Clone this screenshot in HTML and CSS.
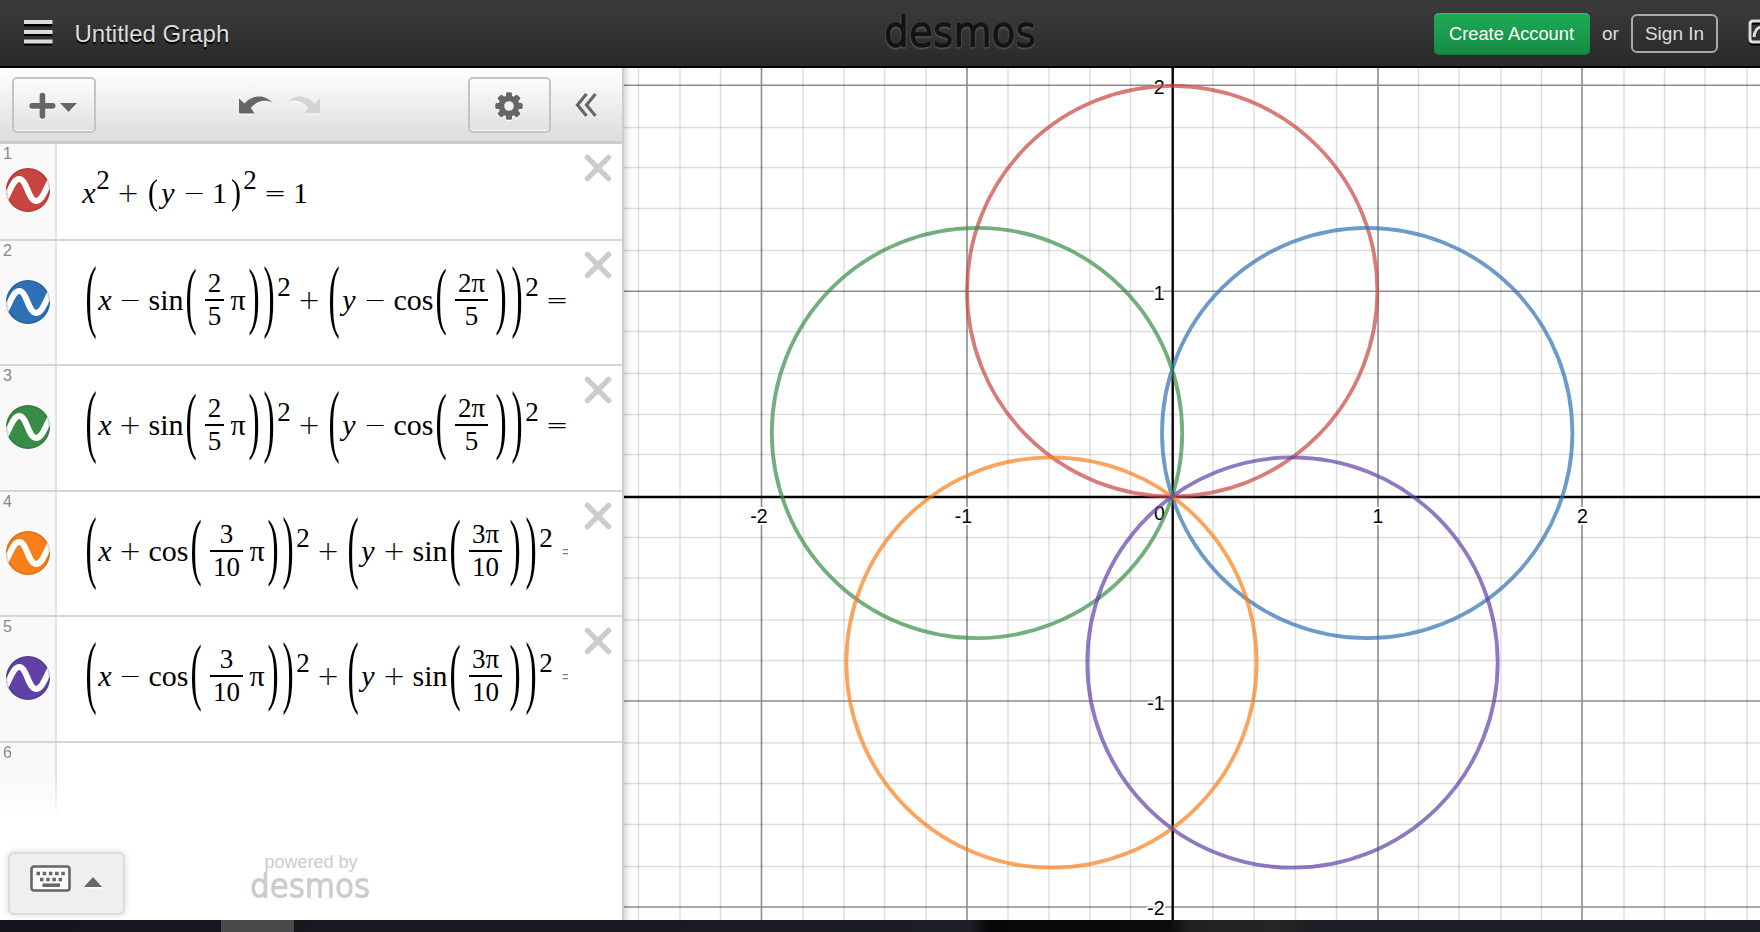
FILE: index.html
```
<!DOCTYPE html>
<html lang="en">
<head>
<meta charset="utf-8">
<title>Untitled Graph</title>
<link rel="stylesheet" href="styles.css">
</head>
<body>
<svg class="defs" width="0" height="0">
  <defs>
    <clipPath id="disc"><circle cx="22" cy="22" r="22"/></clipPath>
    <symbol id="wave" viewBox="0 0 44 44">
      <circle cx="22" cy="22" r="22" fill="currentColor"/>
      <g clip-path="url(#disc)"><path d="M-1 32C6 18 8 11 13.500 11C20.500 11 22.500 33 30 33C35.500 33 38 25 45 11" fill="none" stroke="#fff" stroke-width="6"/></g>
      <circle cx="22" cy="22" r="21.2" fill="none" stroke="#000" stroke-opacity=".12" stroke-width="1.6"/>
    </symbol>
    <symbol id="cross" viewBox="0 0 28 28"><path d="M3.4 3.4L24.6 24.6M24.6 3.4L3.4 24.6" stroke="#ccc" stroke-width="5.4" stroke-linecap="round"/></symbol>
  </defs>
</svg>

<header class="header">
  <div class="header-left">
    <svg class="burger" width="29" height="26" viewBox="0 0 29 26"><path d="M0 4.5h28M0 14h28M0 23.5h28" stroke="#000" stroke-width="4"/><path d="M0 2h28.500M0 12h28.500M0 21.500h28.500" stroke="#ddd" stroke-width="4"/></svg>
    <span class="title">Untitled Graph</span>
  </div>
  <svg class="logo" width="156" height="60" viewBox="0 0 156 60"><text x="2" y="43" textLength="152" lengthAdjust="spacingAndGlyphs" class="logo-text">desmos</text></svg>
  <div class="header-right">
    <span class="btn-create">Create Account</span>
    <span class="or">or</span>
    <span class="btn-sign">Sign In</span>
    <svg class="share" width="12" height="28" viewBox="0 0 12 28"><path d="M13 4H5Q2 4 2 7V22Q2 25 5 25H13" fill="none" stroke="#000" stroke-width="3"/><path d="M13 2H5Q2 2 2 5V20Q2 23 5 23H13M6 18Q7 9 13 8" fill="none" stroke="#ddd" stroke-width="3"/></svg>
  </div>
</header>

<main class="main">
  <section class="panel">
    <div class="toolbar">
      <span class="tool add">
        <svg width="50" height="30" viewBox="0 0 50 30"><path d="M3 14.500H25M14 3.500V25.500" stroke="#666" stroke-width="6" stroke-linecap="round" transform="translate(.400 1.400) scale(.93)"/><path d="M31 12H48L39.500 21Z" fill="#666"/></svg>
      </span>
      <span class="history">
        <svg width="84" height="20" viewBox="0 0 84 20"><path d="M1 3.500L6.500 8.500C14 0 26 -1.500 34.500 7.500C27 4 19 5.500 13 13L16.500 18.500H2.500Q1 18.500 1 17Z" fill="#666"/><path d="M82 3.500L76.500 8.500C69 0 57 -1.500 48.500 7.500C56 4 64 5.500 70 13L66.500 18.500H80.500Q82 18.500 82 17Z" fill="#d4d4d4"/></svg>
      </span>
      <span class="tool gear">
        <svg width="28" height="28" viewBox="-14 -14 28 28"><g fill="#666"><rect x="-3" y="-13.700" width="6" height="27.400" rx="1.500"/><rect x="-3" y="-13.700" width="6" height="27.400" rx="1.500" transform="rotate(45)"/><rect x="-3" y="-13.700" width="6" height="27.400" rx="1.500" transform="rotate(90)"/><rect x="-3" y="-13.700" width="6" height="27.400" rx="1.500" transform="rotate(135)"/><circle r="10.500"/></g><circle r="4.800" fill="#f1f1f1"/></svg>
      </span>
      <svg class="collapse" width="23" height="26" viewBox="0 0 23 26"><path d="M11.500 2L2.500 13L11.500 24M20.500 2L11.500 13L20.500 24" fill="none" stroke="#666" stroke-width="3.200"/></svg>
    </div>

    <div class="row r1">
      <div class="gutter"><span class="num">1</span><svg class="dot c1"><use href="#wave"/></svg></div>
      <div class="body"><div class="math simple">
        <i>x</i><span class="sup">2</span><span class="op">+</span><span class="p small">(</span><i class="y">y</i><span class="op">−</span><span class="d">1</span><span class="p small close">)</span><span class="sup">2</span><span class="op">=</span><span class="d">1</span>
      </div></div>
      <svg class="x"><use href="#cross"/></svg>
    </div>
    <div class="row r2">
      <div class="gutter"><span class="num">2</span><svg class="dot c2"><use href="#wave"/></svg></div>
      <div class="body"><div class="math">
        <span class="p big">(</span><i>x</i><span class="op">−</span><span class="fn sin">sin</span><span class="p mid">(</span><span class="frac"><span>2</span><span>5</span></span><span class="pi">π</span><span class="p mid">)</span><span class="p big">)</span><span class="sup">2</span><span class="op">+</span><span class="p big">(</span><i class="y">y</i><span class="op">−</span><span class="fn cos">cos</span><span class="p mid">(</span><span class="frac wide"><span>2π</span><span>5</span></span><span class="p mid after">)</span><span class="p big last">)</span><span class="sup">2</span><span class="op">=</span>
      </div></div>
      <svg class="x"><use href="#cross"/></svg>
    </div>
    <div class="row r3">
      <div class="gutter"><span class="num">3</span><svg class="dot c3"><use href="#wave"/></svg></div>
      <div class="body"><div class="math">
        <span class="p big">(</span><i>x</i><span class="op">+</span><span class="fn sin">sin</span><span class="p mid">(</span><span class="frac"><span>2</span><span>5</span></span><span class="pi">π</span><span class="p mid">)</span><span class="p big">)</span><span class="sup">2</span><span class="op">+</span><span class="p big">(</span><i class="y">y</i><span class="op">−</span><span class="fn cos">cos</span><span class="p mid">(</span><span class="frac wide"><span>2π</span><span>5</span></span><span class="p mid after">)</span><span class="p big last">)</span><span class="sup">2</span><span class="op">=</span>
      </div></div>
      <svg class="x"><use href="#cross"/></svg>
    </div>
    <div class="row r2">
      <div class="gutter"><span class="num">4</span><svg class="dot c4"><use href="#wave"/></svg></div>
      <div class="body"><div class="math">
        <span class="p big">(</span><i>x</i><span class="op">+</span><span class="fn cos">cos</span><span class="p mid">(</span><span class="frac wide"><span>3</span><span>10</span></span><span class="pi">π</span><span class="p mid">)</span><span class="p big">)</span><span class="sup">2</span><span class="op">+</span><span class="p big">(</span><i class="y">y</i><span class="op">+</span><span class="fn sin">sin</span><span class="p mid">(</span><span class="frac wide"><span>3π</span><span>10</span></span><span class="p mid after">)</span><span class="p big last">)</span><span class="sup">2</span><span class="op faded">=</span>
      </div></div>
      <svg class="x"><use href="#cross"/></svg>
    </div>
    <div class="row r3">
      <div class="gutter"><span class="num">5</span><svg class="dot c5"><use href="#wave"/></svg></div>
      <div class="body"><div class="math">
        <span class="p big">(</span><i>x</i><span class="op">−</span><span class="fn cos">cos</span><span class="p mid">(</span><span class="frac wide"><span>3</span><span>10</span></span><span class="pi">π</span><span class="p mid">)</span><span class="p big">)</span><span class="sup">2</span><span class="op">+</span><span class="p big">(</span><i class="y">y</i><span class="op">+</span><span class="fn sin">sin</span><span class="p mid">(</span><span class="frac wide"><span>3π</span><span>10</span></span><span class="p mid after">)</span><span class="p big last">)</span><span class="sup">2</span><span class="op faded">=</span>
      </div></div>
      <svg class="x"><use href="#cross"/></svg>
    </div>
    <div class="row empty"><div class="gutter"><span class="num">6</span></div></div>

    <footer class="panel-foot">
      <span class="keypad">
        <svg width="42" height="28" viewBox="0 0 42 28"><rect x="1.500" y="1.500" width="38" height="24" rx="2.500" fill="#fafafa" stroke="#666" stroke-width="2.600"/><path d="M6.500 8.500H35.500" stroke="#666" stroke-width="3.500" stroke-dasharray="3.500 2.700"/><path d="M10 14.500H33" stroke="#666" stroke-width="3.500" stroke-dasharray="3.500 2.700"/><path d="M12.500 20.200H30" stroke="#666" stroke-width="3.500"/></svg>
        <svg class="up" width="18" height="12" viewBox="0 0 18 12"><path d="M0 11.500H18L9 1.500Z" fill="#fff"/><path d="M0 10H18L9 0Z" fill="#666"/></svg>
      </span>
      <span class="powered">
        <span class="by">powered by</span>
        <svg width="122" height="34" viewBox="0 0 122 34"><text x="1" y="28" textLength="120" lengthAdjust="spacingAndGlyphs" class="foot-logo">desmos</text></svg>
      </span>
    </footer>
  </section>

  <section class="graph">
    <svg width="1136" height="852" viewBox="624 68 1136 852">
      <path class="minor" d="M638.500 68v852M680 68v852M720.500 68v852M803 68v852M844 68v852M884.500 68v852M926 68v852M1008 68v852M1049 68v852M1090 68v852M1130.500 68v852M1213 68v852M1254 68v852M1295.500 68v852M1336.500 68v852M1418.500 68v852M1459 68v852M1501 68v852M1541.500 68v852M1624 68v852M1664.500 68v852M1705 68v852M1747 68v852"/>
      <path class="minor" d="M624 127.500h1136M624 167.500h1136M624 208.500h1136M624 250.500h1136M624 331.500h1136M624 373.500h1136M624 414.500h1136M624 454.500h1136M624 537.500h1136M624 578h1136M624 620h1136M624 660.500h1136M624 743h1136M624 783.500h1136M624 824.500h1136M624 866.500h1136"/>
      <path class="major" d="M761.500 68v852M967 68v852M1378 68v852M1582 68v852M624 85.300h1136M624 291.300h1136M624 701h1136M624 907h1136"/>
      <path class="axis" d="M1172.700 68v852M624 497h1136"/>
      <g class="labels">
        <text x="759" y="522.500" text-anchor="middle">-2</text><text x="963.500" y="522.500" text-anchor="middle">-1</text><text x="1159.500" y="519.500" text-anchor="middle">0</text><text x="1378" y="522.500" text-anchor="middle">1</text><text x="1582.500" y="522.500" text-anchor="middle">2</text>
        <text x="1164.500" y="94" text-anchor="end">2</text><text x="1164.500" y="299.500" text-anchor="end">1</text><text x="1164.500" y="709.500" text-anchor="end">-1</text><text x="1164.500" y="914.500" text-anchor="end">-2</text>
      </g>
      <g class="curves">
        <circle class="c1" cx="1172.200" cy="291.100" r="205.200"/>
        <circle class="c2" cx="1367.200" cy="433" r="205.200"/>
        <circle class="c3" cx="977" cy="433" r="205.200"/>
        <circle class="c4" cx="1051.500" cy="662.500" r="205.200"/>
        <circle class="c5" cx="1292.500" cy="662.500" r="205.200"/>
      </g>
    </svg>
  </section>
</main>
<div class="taskbar"><span class="task"></span></div>
</body>
</html>
```
FILE: styles.css
```
* { box-sizing: border-box; }
body { margin: 0; width: 1760px; height: 932px; overflow: hidden; background: #fff; font-family: "Liberation Sans", Arial, sans-serif; display: flex; flex-direction: column; }
svg { display: block; flex: none; }
.defs { position: absolute; }

.header { height: 68px; flex: none; border-bottom: 2px solid #000; background: linear-gradient(#3b3b3b, #2a2a2a); display: grid; grid-template-columns: 882px 156px 1fr; align-items: center; color: #ddd; overflow: hidden; }
.header-left { display: flex; align-items: center; padding-left: 23.5px; gap: 22px; }
.title { font-size: 24px; line-height: 28px; text-shadow: 0 2px 1px #000; white-space: nowrap; padding-top: 1px; }
.logo-text { font: 200 41px "DejaVu Sans", sans-serif; fill: #131313; stroke: #131313; stroke-width: 2.6px; stroke-linejoin: round; }
.logo { filter: drop-shadow(0 1px 1px #666); }
.header-right { display: flex; align-items: center; padding-left: 396px; height: 66px; white-space: nowrap; }
.btn-create { width: 156px; height: 42px; margin-top: 2px; padding-right: 1px; border-radius: 5px; background: linear-gradient(#1dab57, #168a43); box-shadow: inset 0 1px #35bb6c, inset 0 -1px #117438; color: #fff; font-size: 18.3px; line-height: 41px; text-align: center; }
.or { font-size: 19px; width: 41px; text-align: center; padding-top: 1px; }
.btn-sign { width: 87px; height: 39px; border: 2px solid #aaa; border-radius: 6px; font-size: 19px; line-height: 35px; text-align: center; margin-top: 1px; }
.share { margin-left: 30px; }

.main { display: flex; height: 852px; flex: none; }
.panel { width: 624px; flex: none; border-right: 2px solid #ccc; display: flex; flex-direction: column; background: #fff; }
.toolbar { height: 76px; flex: none; display: flex; align-items: center; border-bottom: 3px solid #ccc; background: linear-gradient(#fff, #ddd); padding: 0 24px 0 12px; }
.tool { display: flex; align-items: center; justify-content: center; height: 56px; border: 2px solid #c4c4c4; border-radius: 5px; background: linear-gradient(#fdfdfd, #e0e0e0); box-shadow: inset 0 -1px #fff; }
.toolbar svg { filter: drop-shadow(0 1px 0 #fff); }
.add { width: 84px; padding-top: 3px; }
.history { margin-left: 142px; }
.gear { width: 83px; margin-left: 146px; padding: 2px 1px 0 0; }
.collapse { margin-left: auto; }

.row { flex: none; display: flex; border-bottom: 2px solid #d5d5d5; position: relative; }
.r1 { height: 97px; }
.r2 { height: 125px; }
.r3 { height: 126px; }
.gutter { width: 57px; flex: none; border-right: 2px solid #e3e3e3; background: #f9f9f9; position: relative; display: flex; align-items: center; justify-content: center; }
.num { position: absolute; left: 3px; top: 0; font-size: 16px; line-height: 19px; color: #888; }
.dot { width: 44px; height: 44px; margin-bottom: 2px; }
.r1 .dot { margin-bottom: 3px; }
.c1 { color: #c74440; } .c2 { color: #2d70b3; } .c3 { color: #388c46; } .c4 { color: #fa7e19; } .c5 { color: #6042a6; }
.body { width: 511px; flex: none; overflow: hidden; display: flex; align-items: center; padding-left: 27px; }
.x { width: 28px; height: 28px; margin: 10px 0 0 16px; }
.empty { height: 90px; border: 0; }
.empty .gutter { border-right: 0; background: linear-gradient(90deg, transparent 55px, #e3e3e3 55px), #f9f9f9; mask-image: linear-gradient(#000 40%, transparent 85%); }

.math { display: flex; align-items: center; font: 30px/30px "Liberation Serif", serif; color: #000; white-space: nowrap; margin-bottom: 6px; }
.math > * { flex: none; text-align: center; }
.simple { margin: 3px 0 0 -2px; }
.math i { width: 14px; }
.math i.y { width: 16px; }
.op { width: 36px; font: 200 27px/30px "DejaVu Sans", sans-serif; }
.faded { opacity: .5; }
.sup { width: 14px; font-size: 27px; margin: 0 0 26px 1px; }
.simple .sup { margin: 0 0 27px; }
.math > .d { width: 15px; }
.p { width: 14px; height: 30px; transform-origin: 50% 18.2px; }
.small { transform: scale(1, 1.18); }
.small.close { margin-left: 2px; }
.mid { transform: scale(1.12, 2.45); }
.big { transform: scale(1.12, 2.7); }
.mid + .big { margin-left: 1px; }
.mid + .last { margin-left: 2px; }
.after { margin-left: 6px; }
.sin { width: 36px; }
.cos { width: 41px; }
.pi { width: 23px; padding-left: 5px; }
.frac { width: 19px; margin: -1px 0 0 7px; display: flex; flex-direction: column; font-size: 27px; line-height: 32px; }
.wide { width: 33px; }
.frac span:first-child { border-bottom: 2px solid #000; }
.frac span:last-child { margin-top: -1px; }

.panel-foot { margin-top: auto; height: 76px; display: flex; padding-left: 8px; background: #fff; }
.keypad { width: 117px; height: 63px; margin-top: 8px; border: 2px solid #dcdcdc; border-radius: 6px; background: #efefef; box-shadow: 0 0 6px rgba(0,0,0,.15); display: flex; align-items: center; gap: 12px; padding: 0 0 9px 20px; }
.up { margin-top: 8px; }
.powered { width: 122px; margin-left: 124px; color: #ccc; display: flex; flex-direction: column; align-items: center; padding-top: 7px; }
.by { font-size: 18px; line-height: 22px; padding-left: 2px; }
.foot-logo { font: 200 32px "DejaVu Sans", sans-serif; fill: #ccc; stroke: #ccc; stroke-width: 2px; stroke-linejoin: round; }
.powered svg { margin-top: -4px; }

.graph { width: 1136px; background: #fff; box-shadow: inset 7px 0 7px -5px rgba(0,0,0,.2); }
.minor { stroke: #000; stroke-opacity: .13; stroke-width: 1.5px; }
.major { stroke: #000; stroke-opacity: .45; stroke-width: 1.6px; }
.axis { stroke: #000; stroke-width: 2.4px; }
.labels { font-size: 19.5px; fill: #000; stroke: #fff; stroke-width: 4px; stroke-linejoin: round; paint-order: stroke; }
.curves { fill: none; stroke-width: 3.8px; }
.curves circle { stroke: currentColor; stroke-opacity: .7; }

.taskbar { height: 12px; flex: none; background: linear-gradient(90deg, #15161c, #1b1e22 970px, #070809 990px, #0b0b0b 1170px, #23221f 1190px, #262523 1280px, #1b1f23 1310px, #1b1f23); padding-left: 221px; }
.task { display: block; width: 73px; height: 12px; background: #484a4c; }
```
